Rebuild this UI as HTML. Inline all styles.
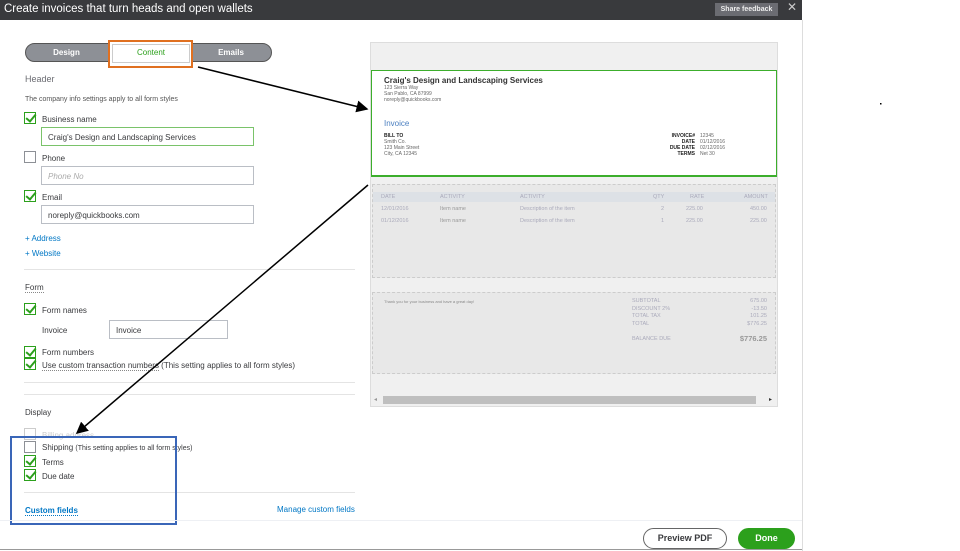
<!DOCTYPE html>
<html><head><meta charset="utf-8"><style>
*{margin:0;padding:0;box-sizing:border-box}
body{width:960px;height:551px;background:#fff;font-family:"Liberation Sans",Arial,sans-serif;position:relative;overflow:hidden;color:#393a3d}
.a{position:absolute}
.t{font-size:8px;color:#393a3d}
.cb{position:absolute;width:12px;height:12px;border:1px solid #8d9096;background:#fff}
.cb.on{border-color:#2ca01c}
.cb.on::after{content:"";position:absolute;left:3px;top:-1px;width:4px;height:8px;border:solid #2ca01c;border-width:0 2px 2px 0;transform:rotate(40deg)}
.inp{position:absolute;border:1px solid #babec5;height:19px;font-size:8px;padding:5px 6px;color:#393a3d}
.lnk{color:#0077c5;font-size:8px}
.s{font-size:5px;color:#666;line-height:6px}
.g{color:#aab;font-size:5.5px}
</style></head><body>
<div class="a" style="left:0;top:0;width:802px;height:20px;background:#393a3d;color:#fff;font-size:11.5px;padding:3px 4px">Create invoices that turn heads and open wallets</div>
<div class="a" style="left:715px;top:3px;width:63px;height:13px;background:#6b6c72;color:#eee;font-size:7px;font-weight:bold;text-align:center;line-height:13px">Share feedback</div>
<div class="a" style="left:787px;top:0px;color:#ccc;font-size:12px">✕</div>
<div class="a" style="left:802px;top:20px;width:1px;height:531px;background:#ddd"></div>
<!-- tabs -->
<div class="a" style="left:25px;top:43px;width:247px;height:19px;background:#8d9096;border:1px solid #555;border-radius:10px"></div>
<div class="a" style="left:25px;top:48px;width:83px;text-align:center;color:#fff;font-size:8px;font-weight:bold">Design</div>
<div class="a" style="left:190px;top:48px;width:82px;text-align:center;color:#fff;font-size:8px;font-weight:bold">Emails</div>
<div class="a" style="left:108px;top:40px;width:85px;height:28px;border:2px solid #e07020;background:#fff"></div>
<div class="a" style="left:112px;top:44px;width:78px;height:19px;border:1px solid #ccc;text-align:center;color:#2ca01c;font-size:8px;line-height:16px">Content</div>
<div class="a" style="left:25px;top:74px;font-size:9px;color:#6b6c72">Header</div>
<div class="a t" style="left:25px;top:96px;font-size:7px;color:#555">The company info settings apply to all form styles</div>
<div class="cb on" style="left:24px;top:112px"></div><div class="a t" style="left:42px;top:115px">Business name</div>
<div class="inp" style="left:41px;top:127px;width:213px;border-color:#7ac36a">Craig's Design and Landscaping Services</div>
<div class="cb" style="left:24px;top:151px"></div><div class="a t" style="left:42px;top:154px">Phone</div>
<div class="inp" style="left:41px;top:166px;width:213px;color:#aaa;font-style:italic">Phone No</div>
<div class="cb on" style="left:24px;top:190px"></div><div class="a t" style="left:42px;top:193px">Email</div>
<div class="inp" style="left:41px;top:205px;width:213px">noreply@quickbooks.com</div>
<div class="a lnk" style="left:25px;top:234px">+ Address</div>
<div class="a lnk" style="left:25px;top:249px">+ Website</div>
<div class="a" style="left:24px;top:269px;width:331px;height:1px;background:#e4e4e4"></div>
<div class="a t" style="left:25px;top:283px;border-bottom:1px dotted #888">Form</div>
<div class="cb on" style="left:24px;top:303px"></div><div class="a t" style="left:42px;top:306px">Form names</div>
<div class="a t" style="left:42px;top:326px">Invoice</div>
<div class="inp" style="left:109px;top:320px;width:119px">Invoice</div>
<div class="cb on" style="left:24px;top:346px"></div><div class="a t" style="left:42px;top:348px">Form numbers</div>
<div class="cb on" style="left:24px;top:358px"></div><div class="a t" style="left:42px;top:361px"><span style="border-bottom:1px dotted #888">Use custom transaction numbers</span> (This setting applies to all form styles)</div>
<div class="a" style="left:24px;top:382px;width:331px;height:1px;background:#e4e4e4"></div>
<div class="a" style="left:24px;top:394px;width:331px;height:1px;background:#e4e4e4"></div>
<div class="a t" style="left:25px;top:408px">Display</div>
<div class="cb" style="left:24px;top:428px;border-color:#ccc"></div><div class="a t" style="left:42px;top:431px;color:#ccc">Billing address</div>
<div class="cb" style="left:24px;top:441px"></div><div class="a t" style="left:42px;top:443px">Shipping <span style="font-size:7px">(This setting applies to all form styles)</span></div>
<div class="cb on" style="left:24px;top:455px"></div><div class="a t" style="left:42px;top:458px">Terms</div>
<div class="cb on" style="left:24px;top:469px"></div><div class="a t" style="left:42px;top:472px">Due date</div>
<div class="a" style="left:24px;top:492px;width:331px;height:1px;background:#e4e4e4"></div>
<div class="a lnk" style="left:25px;top:506px;font-weight:bold;border-bottom:1px dotted #0077c5">Custom fields</div>
<div class="a lnk" style="left:277px;top:505px">Manage custom fields</div>
<div class="a" style="left:10px;top:436px;width:167px;height:89px;border:2px solid #3a66b8"></div>
<!-- preview -->
<div class="a" style="left:370px;top:42px;width:408px;height:365px;background:#f0f0f0;border:1px solid #ddd"></div>
<div class="a" style="left:371px;top:70px;width:406px;height:107px;background:#fff;border:1px solid #3cae2c;border-bottom-width:2px"></div>
<div class="a" style="left:384px;top:76px;font-size:8px;font-weight:bold;color:#333">Craig's Design and Landscaping Services</div>
<div class="a s" style="left:384px;top:85px">123 Sierra Way<br>San Pablo, CA 87999<br>noreply@quickbooks.com</div>
<div class="a" style="left:384px;top:119px;font-size:8px;color:#4a7fc0">Invoice</div>
<div class="a s" style="left:384px;top:133px"><b style="color:#222">BILL TO</b><br>Smith Co.<br>123 Main Street<br>City, CA 12345</div>
<div class="a s" style="left:650px;top:133px;text-align:right;width:45px;color:#222;font-weight:bold">INVOICE#<br>DATE<br>DUE DATE<br>TERMS</div>
<div class="a s" style="left:700px;top:133px">12345<br>01/12/2016<br>02/12/2016<br>Net 30</div>
<div class="a" style="left:372px;top:184px;width:404px;height:94px;background:#e8e8e8;border:1px dashed #ccc"></div>
<div class="a" style="left:373px;top:192px;width:402px;height:10px;background:#dde1e6"></div>
<div class="a g" style="left:381px;top:194px">DATE</div><div class="a g" style="left:440px;top:194px">ACTIVITY</div><div class="a g" style="left:520px;top:194px">ACTIVITY</div><div class="a g" style="left:653px;top:194px">QTY</div><div class="a g" style="left:690px;top:194px">RATE</div><div class="a g" style="left:744px;top:194px">AMOUNT</div>
<div class="a g" style="left:381px;top:206px">12/01/2016</div><div class="a g" style="left:440px;top:206px;color:#999">Item name</div><div class="a g" style="left:520px;top:206px">Description of the item</div><div class="a g" style="left:661px;top:206px">2</div><div class="a g" style="left:686px;top:206px">225.00</div><div class="a g" style="left:750px;top:206px">450.00</div>
<div class="a g" style="left:381px;top:218px">01/12/2016</div><div class="a g" style="left:440px;top:218px;color:#999">Item name</div><div class="a g" style="left:520px;top:218px">Description of the item</div><div class="a g" style="left:661px;top:218px">1</div><div class="a g" style="left:686px;top:218px">225.00</div><div class="a g" style="left:750px;top:218px">225.00</div>
<div class="a" style="left:372px;top:292px;width:404px;height:82px;background:#e8e8e8;border:1px dashed #ccc"></div>
<div class="a" style="left:384px;top:299px;font-size:4px;color:#888">Thank you for your business and have a great day!</div>
<div class="a g" style="left:632px;top:298px;line-height:7.5px">SUBTOTAL<br>DISCOUNT 2%<br>TOTAL TAX<br>TOTAL</div>
<div class="a g" style="left:730px;top:298px;line-height:7.5px;text-align:right;width:37px">675.00<br>-13.50<br>101.25<br>$776.25</div>
<div class="a g" style="left:632px;top:336px">BALANCE DUE</div>
<div class="a" style="left:730px;top:334px;width:37px;text-align:right;font-size:7.5px;font-weight:bold;color:#999">$776.25</div>
<div class="a" style="left:383px;top:396px;width:373px;height:8px;background:#bfbfbf"></div>
<div class="a" style="left:374px;top:396px;font-size:6px;color:#999">◂</div>
<div class="a" style="left:769px;top:396px;font-size:6px;color:#333">▸</div>
<!-- footer -->
<div class="a" style="left:0;top:520px;width:802px;height:1px;background:#eef0f4"></div>
<div class="a" style="left:0;top:549px;width:802px;height:1px;background:#999"></div>
<div class="a" style="left:643px;top:528px;width:84px;height:21px;border:1px solid #666;border-radius:11px;font-size:9px;font-weight:bold;text-align:center;line-height:19px">Preview PDF</div>
<div class="a" style="left:738px;top:528px;width:57px;height:21px;background:#2ca01c;border-radius:11px;color:#fff;font-size:9px;font-weight:bold;text-align:center;line-height:21px">Done</div>
<svg class="a" style="left:0;top:0" width="960" height="551">
<defs><marker id="m" markerWidth="8" markerHeight="8" refX="7" refY="4" orient="auto"><path d="M0,0L8,4L0,8z" fill="#000"/></marker></defs>
<line x1="198" y1="67" x2="367" y2="109" stroke="#000" stroke-width="1.5" marker-end="url(#m)"/>
<line x1="368" y1="185" x2="77" y2="433" stroke="#000" stroke-width="1.5" marker-end="url(#m)"/>
<rect x="880" y="103" width="1.5" height="1.5" fill="#000"/>
</svg>
</body></html>
